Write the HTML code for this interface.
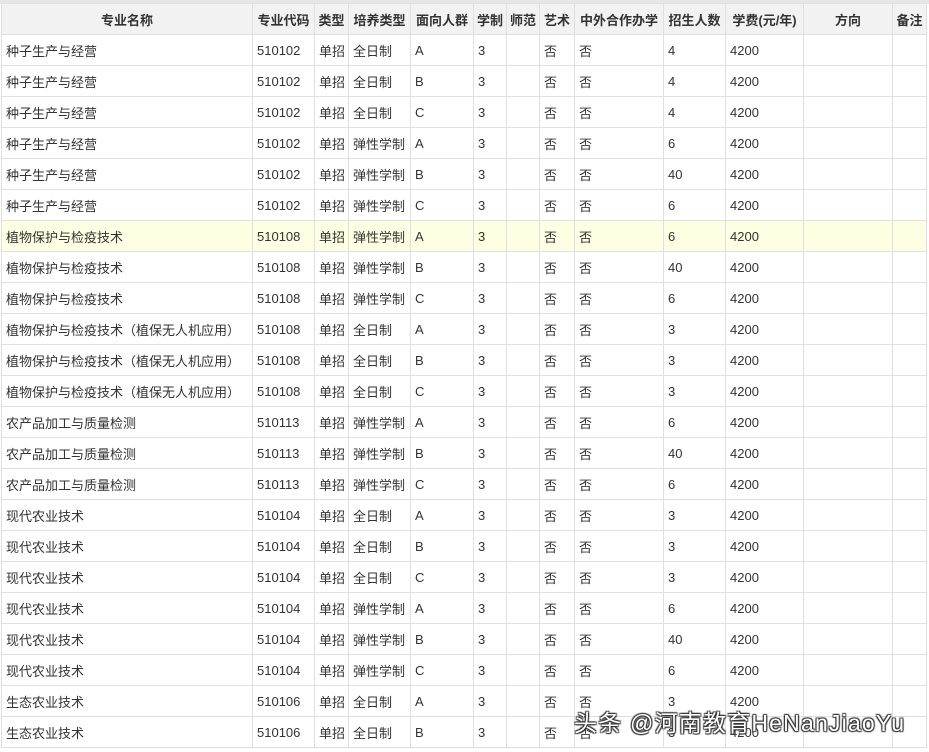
<!DOCTYPE html>
<html><head><meta charset="utf-8"><style>
body{margin:0;width:929px;height:752px;overflow:hidden;background:#fff;font-family:"Liberation Sans","Noto Sans CJK SC",sans-serif;font-size:13px;color:#333;position:relative}
.top{position:absolute;left:0;top:0;width:929px;height:4px;background:#e6e6e6}
table{position:absolute;left:1px;top:3px;border-collapse:collapse;table-layout:fixed}
td,th{border:1px solid #e0e0e0;height:30px;padding:0 0 0 4px;white-space:nowrap;overflow:hidden;text-align:left;font-weight:normal}
th{background:#f2f2f2;font-weight:bold;text-align:center;padding:0}
tr.h td{background:#fefee3}
.wm{position:absolute;left:574px;top:704px;font-size:23px;color:#fff;letter-spacing:1.2px;text-shadow:1px 1px 1px #333,-1px -1px 1px #333,1px -1px 1px #333,-1px 1px 1px #333;font-family:"Liberation Sans","Noto Sans CJK SC",sans-serif}
</style></head><body>
<div class="top"></div>
<table>
<colgroup><col style="width:251px"><col style="width:62px"><col style="width:34px"><col style="width:62px"><col style="width:63px"><col style="width:33px"><col style="width:33px"><col style="width:35px"><col style="width:89px"><col style="width:62px"><col style="width:78px"><col style="width:89px"><col style="width:34px"></colgroup>
<tr><th>专业名称</th><th>专业代码</th><th>类型</th><th>培养类型</th><th>面向人群</th><th>学制</th><th>师范</th><th>艺术</th><th>中外合作办学</th><th>招生人数</th><th>学费(元/年)</th><th>方向</th><th>备注</th></tr>
<tr><td>种子生产与经营</td><td>510102</td><td>单招</td><td>全日制</td><td>A</td><td>3</td><td></td><td>否</td><td>否</td><td>4</td><td>4200</td><td></td><td></td></tr>
<tr><td>种子生产与经营</td><td>510102</td><td>单招</td><td>全日制</td><td>B</td><td>3</td><td></td><td>否</td><td>否</td><td>4</td><td>4200</td><td></td><td></td></tr>
<tr><td>种子生产与经营</td><td>510102</td><td>单招</td><td>全日制</td><td>C</td><td>3</td><td></td><td>否</td><td>否</td><td>4</td><td>4200</td><td></td><td></td></tr>
<tr><td>种子生产与经营</td><td>510102</td><td>单招</td><td>弹性学制</td><td>A</td><td>3</td><td></td><td>否</td><td>否</td><td>6</td><td>4200</td><td></td><td></td></tr>
<tr><td>种子生产与经营</td><td>510102</td><td>单招</td><td>弹性学制</td><td>B</td><td>3</td><td></td><td>否</td><td>否</td><td>40</td><td>4200</td><td></td><td></td></tr>
<tr><td>种子生产与经营</td><td>510102</td><td>单招</td><td>弹性学制</td><td>C</td><td>3</td><td></td><td>否</td><td>否</td><td>6</td><td>4200</td><td></td><td></td></tr>
<tr class="h"><td>植物保护与检疫技术</td><td>510108</td><td>单招</td><td>弹性学制</td><td>A</td><td>3</td><td></td><td>否</td><td>否</td><td>6</td><td>4200</td><td></td><td></td></tr>
<tr><td>植物保护与检疫技术</td><td>510108</td><td>单招</td><td>弹性学制</td><td>B</td><td>3</td><td></td><td>否</td><td>否</td><td>40</td><td>4200</td><td></td><td></td></tr>
<tr><td>植物保护与检疫技术</td><td>510108</td><td>单招</td><td>弹性学制</td><td>C</td><td>3</td><td></td><td>否</td><td>否</td><td>6</td><td>4200</td><td></td><td></td></tr>
<tr><td>植物保护与检疫技术（植保无人机应用）</td><td>510108</td><td>单招</td><td>全日制</td><td>A</td><td>3</td><td></td><td>否</td><td>否</td><td>3</td><td>4200</td><td></td><td></td></tr>
<tr><td>植物保护与检疫技术（植保无人机应用）</td><td>510108</td><td>单招</td><td>全日制</td><td>B</td><td>3</td><td></td><td>否</td><td>否</td><td>3</td><td>4200</td><td></td><td></td></tr>
<tr><td>植物保护与检疫技术（植保无人机应用）</td><td>510108</td><td>单招</td><td>全日制</td><td>C</td><td>3</td><td></td><td>否</td><td>否</td><td>3</td><td>4200</td><td></td><td></td></tr>
<tr><td>农产品加工与质量检测</td><td>510113</td><td>单招</td><td>弹性学制</td><td>A</td><td>3</td><td></td><td>否</td><td>否</td><td>6</td><td>4200</td><td></td><td></td></tr>
<tr><td>农产品加工与质量检测</td><td>510113</td><td>单招</td><td>弹性学制</td><td>B</td><td>3</td><td></td><td>否</td><td>否</td><td>40</td><td>4200</td><td></td><td></td></tr>
<tr><td>农产品加工与质量检测</td><td>510113</td><td>单招</td><td>弹性学制</td><td>C</td><td>3</td><td></td><td>否</td><td>否</td><td>6</td><td>4200</td><td></td><td></td></tr>
<tr><td>现代农业技术</td><td>510104</td><td>单招</td><td>全日制</td><td>A</td><td>3</td><td></td><td>否</td><td>否</td><td>3</td><td>4200</td><td></td><td></td></tr>
<tr><td>现代农业技术</td><td>510104</td><td>单招</td><td>全日制</td><td>B</td><td>3</td><td></td><td>否</td><td>否</td><td>3</td><td>4200</td><td></td><td></td></tr>
<tr><td>现代农业技术</td><td>510104</td><td>单招</td><td>全日制</td><td>C</td><td>3</td><td></td><td>否</td><td>否</td><td>3</td><td>4200</td><td></td><td></td></tr>
<tr><td>现代农业技术</td><td>510104</td><td>单招</td><td>弹性学制</td><td>A</td><td>3</td><td></td><td>否</td><td>否</td><td>6</td><td>4200</td><td></td><td></td></tr>
<tr><td>现代农业技术</td><td>510104</td><td>单招</td><td>弹性学制</td><td>B</td><td>3</td><td></td><td>否</td><td>否</td><td>40</td><td>4200</td><td></td><td></td></tr>
<tr><td>现代农业技术</td><td>510104</td><td>单招</td><td>弹性学制</td><td>C</td><td>3</td><td></td><td>否</td><td>否</td><td>6</td><td>4200</td><td></td><td></td></tr>
<tr><td>生态农业技术</td><td>510106</td><td>单招</td><td>全日制</td><td>A</td><td>3</td><td></td><td>否</td><td>否</td><td>3</td><td>4200</td><td></td><td></td></tr>
<tr><td>生态农业技术</td><td>510106</td><td>单招</td><td>全日制</td><td>B</td><td>3</td><td></td><td>否</td><td>否</td><td>3</td><td>4200</td><td></td><td></td></tr>
</table>
<div class="wm">头条 @河南教育HeNanJiaoYu</div>
</body></html>
